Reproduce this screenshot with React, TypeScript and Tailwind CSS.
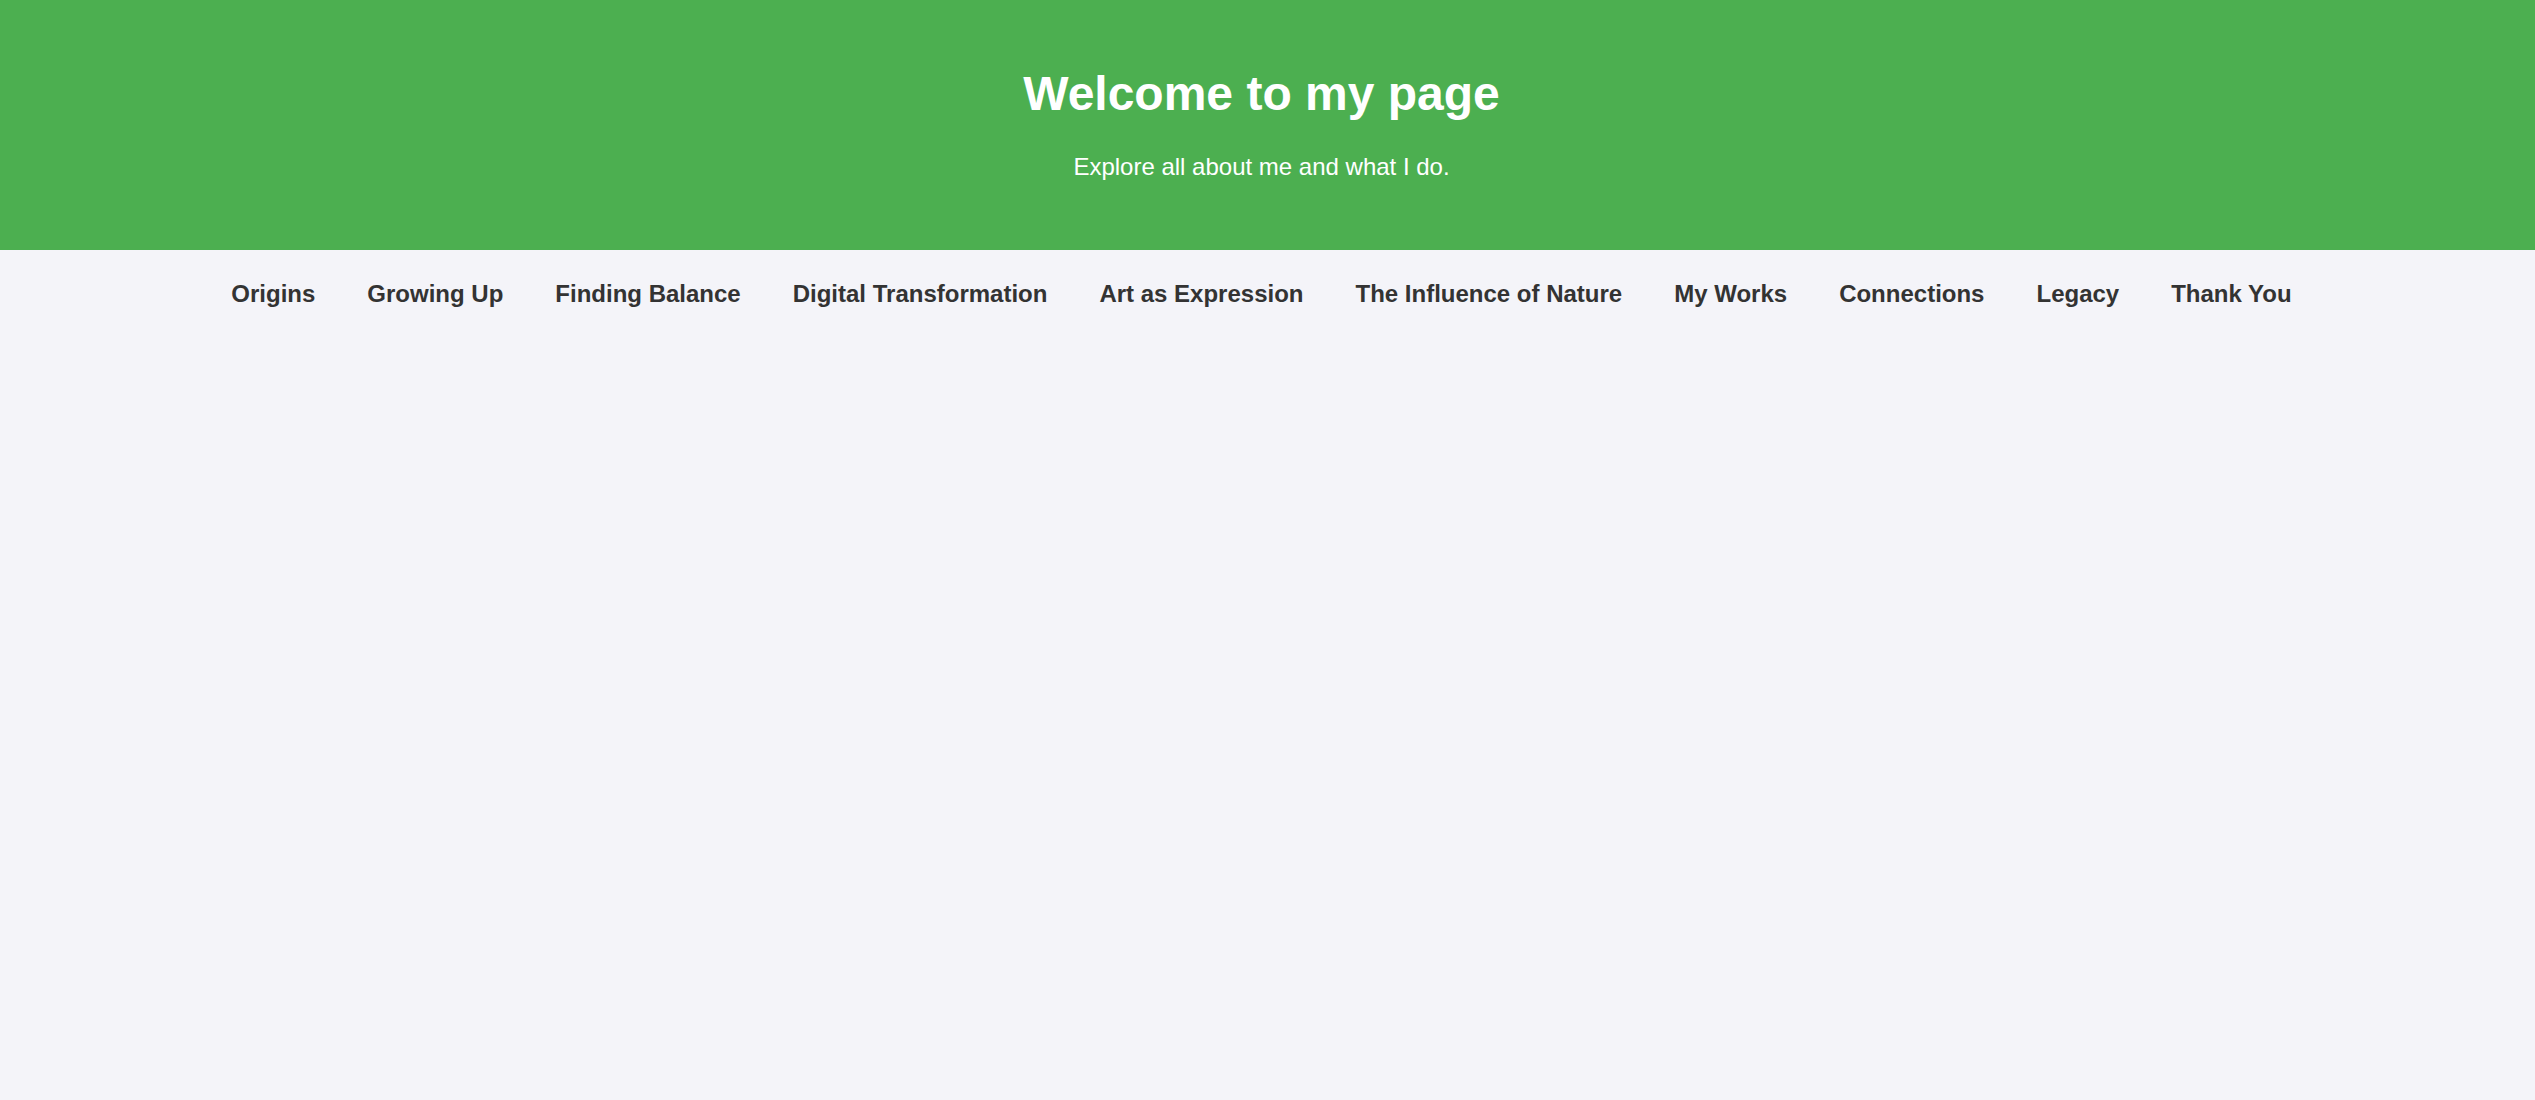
const navItems = [
  "Origins",
  "Growing Up",
  "Finding Balance",
  "Digital Transformation",
  "Art as Expression",
  "The Influence of Nature",
  "My Works",
  "Connections",
  "Legacy",
  "Thank You",
];

export default function App() {
  return (
    <div className="min-h-screen bg-[#f4f4f9] font-['Liberation_Sans',Arial,sans-serif]">
      {/* Header */}
      <header className="bg-[#4caf50] text-white text-center pt-[66px] pb-[69px] pr-[12px]">
        <h1 className="text-[48px] leading-[55px] font-bold">Welcome to my page</h1>
        <p className="mt-[32px] text-[24px] leading-[28px]">
          Explore all about me and what I do.
        </p>
      </header>

      {/* Navigation */}
      <nav className="pt-[30px]">
        <ul className="flex justify-center gap-[52px] pr-[12px]">
          {navItems.map((item) => (
            <li key={item}>
              <a href="#" className="text-[24px] leading-[28px] font-bold text-[#333]">
                {item}
              </a>
            </li>
          ))}
        </ul>
      </nav>
    </div>
  );
}
